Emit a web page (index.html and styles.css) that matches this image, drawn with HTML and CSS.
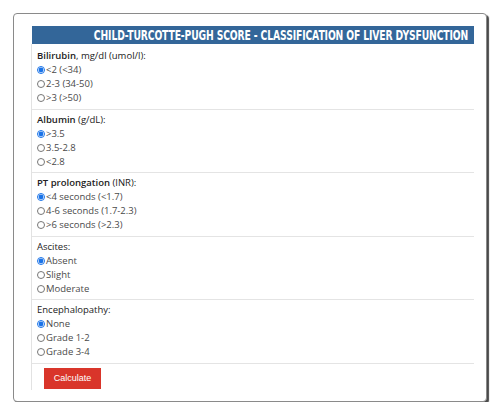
FILE: index.html
```html
<!DOCTYPE html>
<html>
<head>
<meta charset="utf-8">
<link rel="stylesheet" href="styles.css">
</head>
<body>
<div class="card">
  <div class="title"><span class="title-text">CHILD-TURCOTTE-PUGH SCORE - CLASSIFICATION OF LIVER DYSFUNCTION</span></div>
  <form class="form">
    <div class="group">
      <div class="label"><b>Bilirubin</b>, mg/dl (umol/l):</div>
      <label class="opt"><input type="radio" name="bili" checked>&lt;2 (&lt;34)</label>
      <label class="opt"><input type="radio" name="bili">2-3 (34-50)</label>
      <label class="opt"><input type="radio" name="bili">&gt;3 (&gt;50)</label>
    </div>
    <div class="group">
      <div class="label"><b>Albumin</b> (g/dL):</div>
      <label class="opt"><input type="radio" name="alb" checked>&gt;3.5</label>
      <label class="opt"><input type="radio" name="alb">3.5-2.8</label>
      <label class="opt"><input type="radio" name="alb">&lt;2.8</label>
    </div>
    <div class="group">
      <div class="label"><b>PT prolongation</b> (INR):</div>
      <label class="opt"><input type="radio" name="pt" checked>&lt;4 seconds (&lt;1.7)</label>
      <label class="opt"><input type="radio" name="pt">4-6 seconds (1.7-2.3)</label>
      <label class="opt"><input type="radio" name="pt">&gt;6 seconds (&gt;2.3)</label>
    </div>
    <div class="group">
      <div class="label"><span class="name">Ascites</span>:</div>
      <label class="opt"><input type="radio" name="asc" checked>Absent</label>
      <label class="opt"><input type="radio" name="asc">Slight</label>
      <label class="opt"><input type="radio" name="asc">Moderate</label>
    </div>
    <div class="group">
      <div class="label"><span class="name">Encephalopathy</span>:</div>
      <label class="opt"><input type="radio" name="enc" checked>None</label>
      <label class="opt"><input type="radio" name="enc">Grade 1-2</label>
      <label class="opt"><input type="radio" name="enc">Grade 3-4</label>
    </div>
    <div class="actions">
      <button type="button" class="btn">Calculate</button>
    </div>
  </form>
</div>
</body>
</html>
```
FILE: styles.css
```css
html, body {
  margin: 0;
  padding: 0;
  background: #ffffff;
}
body {
  font-family: "Open Sans", "Liberation Sans", sans-serif;
  color: #333333;
}
.card {
  box-sizing: border-box;
  width: 474px;
  margin: 13px 0 0 13px;
  padding: 12px 12px 11px 18px;
  border: 1px solid #8a8a8a;
  border-radius: 4px;
  box-shadow: 2px 2px 1px #4a4a4a;
  background: #fff;
}
.title {
  display: flex;
  justify-content: flex-end;
  height: 18px;
  line-height: 18px;
  background: #336699;
  color: #ffffff;
  font-family: "DejaVu Sans", sans-serif;
  font-weight: bold;
  font-size: 14px;
  padding-right: 6px;
  white-space: nowrap;
  overflow: hidden;
}
.title-text {
  flex: none;
  transform: scaleX(0.66);
  transform-origin: right center;
  letter-spacing: -0.2px;
}
.form {
  margin: 0;
  padding-top: 2px;
  border-left: 1px solid #e2e2e2;
  margin-left: -1px;
}
.group {
  padding: 3px 0 3.5px 5px;
  border-bottom: 1px solid #e4e4e4;
  font-size: 9.5px;
}
.label {
  line-height: 14px;
  height: 14px;
  color: #222;
}
.label b {
  font-weight: 600;
}
.opt {
  display: flex;
  align-items: center;
  line-height: 14px;
  height: 14px;
  color: #4a4a4a;
}
.opt input {
  width: 8px;
  height: 8px;
  margin: 0 1px 0 0;
  accent-color: #1a73e8;
}
.actions {
  padding: 4px 0 1px 12px;
}
.btn {
  width: 57px;
  height: 21px;
  padding: 0;
  border: none;
  border-radius: 0;
  background: #d9352a;
  color: #fff;
  font-family: "Liberation Sans", Arial, sans-serif;
  font-size: 9px;
  display: block;
}
```
